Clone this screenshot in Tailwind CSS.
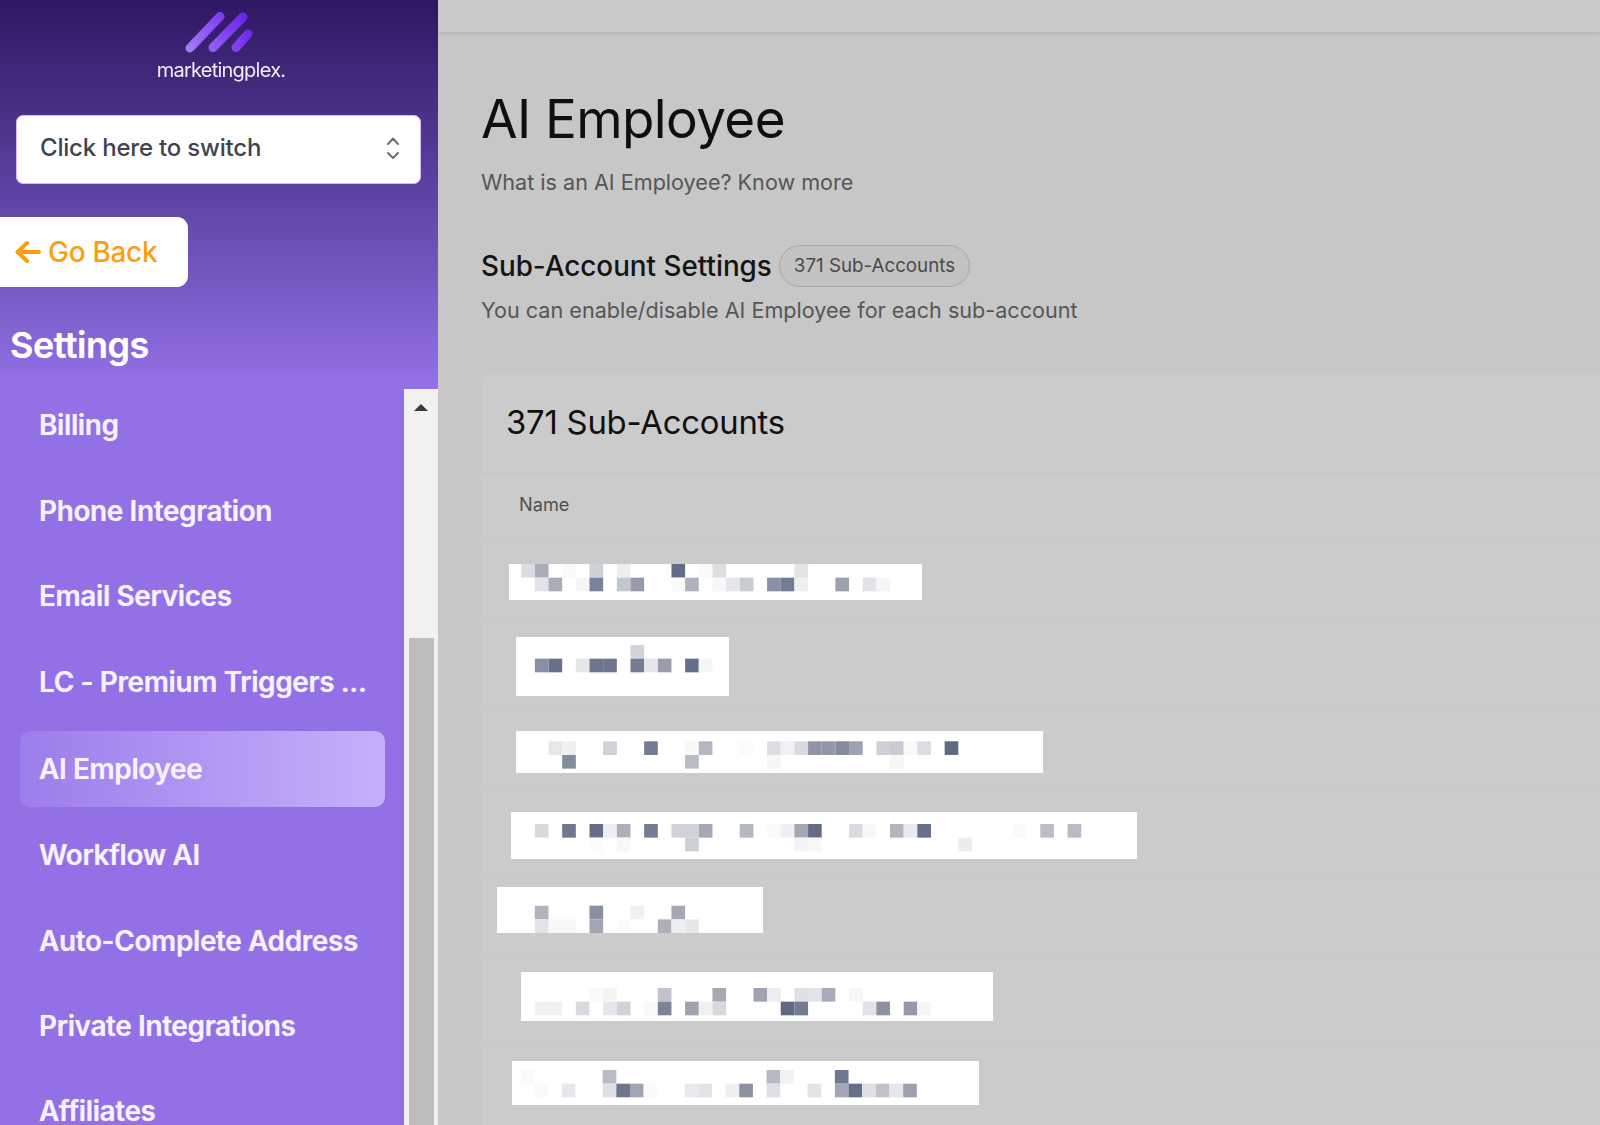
<!DOCTYPE html>
<html lang="en">
<head>
  <meta charset="UTF-8">
  <title>AI Employee - Settings</title>
  <script src="https://cdn.jsdelivr.net/npm/@tailwindcss/browser@4"></script>
</head>
<body class="font-['Inter',sans-serif] h-screen overflow-hidden flex bg-[#c7c7c7]">
  <!-- sidebar -->
  <aside class="w-[438px] h-[1125px] shrink-0 flex flex-col overflow-hidden bg-linear-to-b from-[#2f1763] via-[#9370e6] via-[34%] to-[#9370e6]">
    <div class="h-[115px] shrink-0 flex flex-col items-center">
      <svg class="mt-[10px] -ml-[4px]" width="76" height="44" viewBox="0 0 76 44" fill="none" stroke-linecap="round" stroke-width="9">
        <defs>
          <linearGradient id="logoGrad" gradientUnits="userSpaceOnUse" x1="6" y1="38" x2="66" y2="4">
            <stop offset="0" stop-color="#a77cf7"/>
            <stop offset="1" stop-color="#6a22ea"/>
          </linearGradient>
        </defs>
        <path stroke="url(#logoGrad)" d="M11 38 41 6.500"/>
        <path stroke="url(#logoGrad)" d="M34 37.500 64 7"/>
        <path stroke="url(#logoGrad)" d="M57 37.500 69 24"/>
      </svg>
      <div class="text-[20px] leading-[24px] mt-[4px] ml-[4px] text-[#f1ecfa] tracking-[-0.75px] blur-[0.5px]">marketingplex.</div>
    </div>

    <button class="ml-[16px] w-[405px] h-[69px] shrink-0 rounded-[7px] bg-white border border-[#d9b8f5] flex items-center justify-between pl-[23px] pr-[20px]">
      <span class="text-[24px] leading-[32px] -mt-[3px] font-medium text-[#3f4450] tracking-[-0.2px]">Click here to switch</span>
      <svg class="-mt-[3px]" width="14" height="24" viewBox="0 0 14 24" fill="none" stroke="#6b6f78" stroke-width="2" stroke-linecap="round" stroke-linejoin="round">
        <path d="M2 8 7 2.500 12 8"/>
        <path d="M2 17 7 22 12 17"/>
      </svg>
    </button>

    <a class="mt-[33px] w-[188px] h-[70px] shrink-0 bg-white rounded-r-[11px] flex items-center pl-[15px] gap-[7px] text-[#fb9f10]">
      <svg width="26" height="24" viewBox="0 0 26 24" fill="none" stroke="currentColor" stroke-width="4" stroke-linecap="round" stroke-linejoin="round">
        <path d="M24 12H3"/>
        <path d="M12 3 2.500 12 12 21"/>
      </svg>
      <span class="text-[28px] font-medium tracking-[-0.3px]">Go Back</span>
    </a>

    <div class="h-[102px] shrink-0 flex items-center pl-[10px]">
      <h2 class="mt-[14px] text-[36px] font-semibold text-white tracking-[-0.5px] [text-shadow:0_0_1px_rgba(255,255,255,0.6)]">Settings</h2>
    </div>

    <div class="flex flex-1 min-h-0">
      <nav class="w-[404px] shrink-0 -mt-[2px] flex flex-col gap-[10px] text-[28px] leading-[28px] font-semibold text-[#f6f1ff] tracking-[-0.4px] [text-shadow:0_0_1px_rgba(255,255,255,0.6)]">
        <a class="h-[76px] shrink-0 flex items-center pl-[39px]">Billing</a>
        <a class="h-[76px] shrink-0 flex items-center pl-[39px]">Phone Integration</a>
        <a class="h-[76px] shrink-0 flex items-center pl-[39px] -mt-[1px] mb-[1px]">Email Services</a>
        <a class="h-[76px] shrink-0 flex items-center pl-[39px] -mt-[1px] mb-[1px]">LC - Premium Triggers ...</a>
        <a class="h-[76px] shrink-0 flex items-center pl-[19px] ml-[20px] w-[365px] rounded-[10px] bg-linear-to-r from-[#9d7dea] to-[#c6b0fb]">AI Employee</a>
        <a class="h-[76px] shrink-0 flex items-center pl-[39px]">Workflow AI</a>
        <a class="h-[76px] shrink-0 flex items-center pl-[39px]">Auto-Complete Address</a>
        <a class="h-[76px] shrink-0 flex items-center pl-[39px] -mt-[1px] mb-[1px]">Private Integrations</a>
        <a class="h-[50px] shrink-0 flex items-start pt-[22px] pl-[39px]">Affiliates</a>
      </nav>
      <!-- scrollbar -->
      <div class="flex-1 bg-[#f1f1f1] flex flex-col items-center relative">
        <div class="mt-[15px] w-0 h-0 border-x-[7px] border-x-transparent border-b-[7px] border-b-[#3a3a3a]"></div>
        <div class="absolute top-[249px] left-[5px] w-[25px] bottom-0 bg-[#bdbdbd]"></div>
      </div>
    </div>
  </aside>

  <!-- main -->
  <main class="flex-1 min-w-0">
    <div class="h-[32px] bg-[#cacaca] shadow-[0_1px_4px_rgba(0,0,0,0.12)]"></div>
    <div class="pl-[43px]">
      <h1 class="mt-[54px] text-[53px] leading-[66px] text-[#0f0f0f] tracking-[-0.6px]">AI Employee</h1>
      <p class="mt-[15px] text-[21.6px] leading-[30px] text-[#565656]">What is an AI Employee? Know more</p>
      <div class="mt-[48px] flex items-center gap-[7px]">
        <h3 class="text-[27.8px] leading-[42px] font-medium text-[#141414]">Sub-Account Settings</h3>
        <span class="h-[42px] px-[14px] flex items-center rounded-full border border-[#a9a9a9] bg-[#c2c2c2] text-[18.75px] text-[#4a4a4a]">371 Sub-Accounts</span>
      </div>
      <p class="mt-[8px] text-[21.6px] leading-[30px] text-[#565656]">You can enable/disable AI Employee for each sub-account</p>

      <section class="mt-[48px] rounded-tl-[12px] bg-[#cbcbcb]">
        <div class="h-[100px] flex items-center pl-[25px] border-b border-[#c6c6c6]">
          <h4 class="text-[32.8px] text-[#101010] tracking-[-0.2px]">371 Sub-Accounts</h4>
        </div>
        <div class="h-[66px] flex items-center pb-[2px] pl-[38px] text-[18.2px] text-[#4f4f4f] border-b border-[#c6c6c6]">Name</div>

        <div class="h-[84px] pl-[28px] pt-[25px] border-b border-[#c6c6c6]"><svg class="mosaic block bg-white" data-row="0" width="413" height="36"></svg></div>
        <div class="h-[83px] pl-[35px] pt-[14px] border-b border-[#c6c6c6]"><svg class="mosaic block bg-white" data-row="1" width="213" height="59"></svg></div>
        <div class="h-[84px] pl-[35px] pt-[25px] border-b border-[#c6c6c6]"><svg class="mosaic block bg-white" data-row="2" width="527" height="42"></svg></div>
        <div class="h-[85px] pl-[30px] pt-[22px] border-b border-[#c6c6c6]"><svg class="mosaic block bg-white" data-row="3" width="626" height="47"></svg></div>
        <div class="h-[84px] pl-[16px] pt-[12px] border-b border-[#c6c6c6]"><svg class="mosaic block bg-white" data-row="4" width="266" height="46"></svg></div>
        <div class="h-[85px] pl-[40px] pt-[13px] border-b border-[#c6c6c6]"><svg class="mosaic block bg-white" data-row="5" width="472" height="49"></svg></div>
        <div class="h-[84px] pl-[31px] pt-[17px]"><svg class="mosaic block bg-white" data-row="6" width="467" height="44"></svg></div>
      </section>
    </div>
  </main>

  <script>
    // redacted names: [box left, box top, top of first pixel row, row A cells, row B cells], cells are column:colour
    const rows = [
      [509, 564, 564,
        '0:dcdde2 1:a9adb8 3:fafafa 5:cdd0d6 7:eeeef0 11:636d84 13:fafafa 14:dddee2 20:e2e3e7',
        '1:e2e3e8 2:a9adb8 4:f6f6f7 5:7b8398 7:c2c6ce 8:979cab 11:fafafa 12:adb2bd 14:f8f8f8 15:e5e6ea 16:c9cbd3 18:8a90a3 19:737c92 20:eeeff1 23:9ba0ae 25:e2e3e7 26:f5f5f6'],
      [516, 637, 645,
        '8:d2d4da',
        '1:8a90a3 2:68718a 4:e5e6ea 5:6d768d 6:6d768d 8:747d93 9:e5e6ea 10:989dac 12:666f87 13:f5f5f6'],
      [516, 731, 741.3,
        '2:e6e7ea 3:f0f0f2 6:cfd1d8 9:737c92 12:f8f8f8 13:b3b7c1 16:fbfbfb 18:dddee3 19:f2f2f4 20:d8dae0 21:8f95a6 22:9298a9 23:848b9e 24:9ea3b1 26:cfd0d7 27:c9cbd3 28:f9f9fa 29:dcdde2 31:5f6982',
        '3:848b9e 12:b7bbc5 18:f6f6f7 27:f5f5f6'],
      [511, 812, 824,
        '1:d9dae0 3:6f788f 5:666f87 6:eeeef1 7:acb0bb 9:747d93 11:d0d2d9 12:d0d2d9 13:a4a8b5 16:b4b8c2 18:fafafa 19:f0f0f2 20:a3a7b4 21:646d85 24:d9dbe0 25:f8f8f9 27:b2b5c0 28:e9eaed 29:68718a 36:fafafa 38:bbbec8 40:b7bbc5',
        '5:fbfbfb 7:f8f8f8 12:cdcfd6 20:f3f3f5 21:f7f7f8 32:ececef'],
      [497, 887, 905.7,
        '1:b0b3be 5:8a90a2 8:f0f0f2 11:a4a8b5',
        '1:e2e3e7 2:f7f7f8 3:f7f7f8 5:a1a5b2 7:fbfbfb 10:adb0bc 11:edeef0 12:e5e6e9'],
      [521, 972, 988,
        '5:f9f9fa 6:f4f4f5 10:c0c3cc 14:a5a9b6 17:a0a4b2 18:eeeef1 20:dfe0e4 21:e2e3e7 22:a8acb8 24:f6f6f7',
        '1:f1f1f3 2:f1f1f3 4:d9dae0 6:e5e6ea 7:d0d2d9 9:f9f9fa 10:7c8499 12:9ea2b1 13:f0f0f2 14:d7d9df 19:5f6982 20:727b91 25:e2e3e7 26:8c92a4 28:959aaa 29:f5f5f6'],
      [512.5, 1061, 1070,
        '0:fafafa 6:b9bcc6 18:b7bac5 19:f2f2f4 23:6f788f',
        '1:fafafa 3:e7e8eb 6:dfe0e5 7:6d768d 8:a1a5b2 9:fafafb 12:e8e9ec 13:e2e3e7 15:eeeff1 16:8c92a4 18:dfe0e5 21:e2e3e7 23:a3a7b4 24:666f87 25:dfe0e4 26:c0c3cc 27:e6e7ea 28:9ca1af'],
    ];
    const cell = 13.66;
    const gridLeft = 521.2;
    document.querySelectorAll('.mosaic').forEach((svg) => {
      const [left, top, firstRow, a, b] = rows[svg.dataset.row];
      [a, b].forEach((cells, r) => {
        cells.split(' ').forEach((c) => {
          const [k, colour] = c.split(':');
          const rect = document.createElementNS('http://www.w3.org/2000/svg', 'rect');
          rect.setAttribute('x', gridLeft + cell * k - left);
          rect.setAttribute('y', firstRow - top + cell * r);
          rect.setAttribute('width', cell);
          rect.setAttribute('height', cell);
          rect.setAttribute('fill', '#' + colour);
          svg.appendChild(rect);
        });
      });
    });
  </script>
</body>
</html>
